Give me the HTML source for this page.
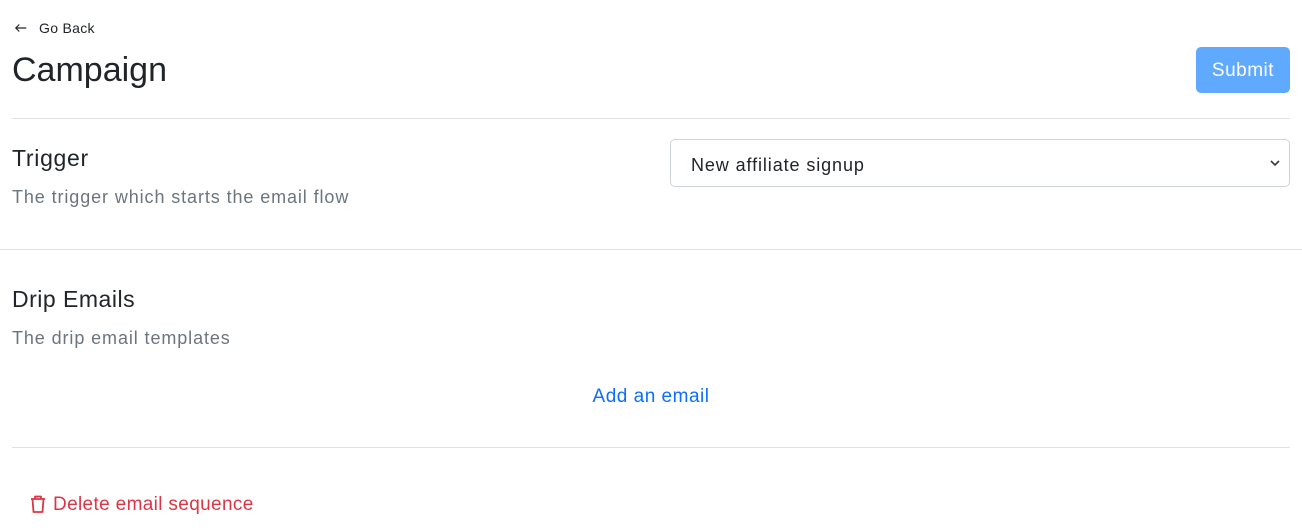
<!DOCTYPE html>
<html><head><style>
body{margin:0;width:1302px;height:532px;background:#fff;font-family:"Liberation Sans",sans-serif;color:#212529;position:relative;overflow:hidden}
.a{position:absolute;white-space:nowrap}
.hr{position:absolute;height:1px;background:#dee2e6}
.g{color:#6c757d;font-size:18px;letter-spacing:0.9px}
</style></head><body>
<div class="a" style="left:14px;top:20px;font-size:14px;color:#212529;letter-spacing:0.3px">
<svg width="14" height="14" viewBox="0 0 16 16" style="vertical-align:-2px;margin-right:11px"><path d="M14 8H2M6 4L2 8l4 4" fill="none" stroke="#212529" stroke-width="1.3"/></svg>Go Back</div>
<div class="a" style="left:12px;top:51px;font-size:34px">Campaign</div>
<div class="a" style="left:1196px;top:47px;width:94px;height:46px;background:#5fa9fe;border-radius:5px;color:#fff;font-size:19px;line-height:48px;text-align:center;letter-spacing:0.5px">Submit</div>
<div class="hr" style="left:12px;width:1278px;top:118px"></div>
<div class="a" style="left:12px;top:145px;font-size:23px;letter-spacing:0.7px">Trigger</div>
<div class="a g" style="left:12px;top:187px">The trigger which starts the email flow</div>
<div class="a" style="left:670px;top:139px;width:618px;height:46px;border:1px solid #ced4da;border-radius:5px;font-size:18px;line-height:50px">
<span style="margin-left:20px;color:#212529;letter-spacing:0.9px">New affiliate signup</span>
<svg width="12" height="10" viewBox="0 0 12 10" style="position:absolute;right:8px;top:18px"><path d="M2 3l4 4 4-4" fill="none" stroke="#343a40" stroke-width="1.6"/></svg></div>
<div class="hr" style="left:0;width:1302px;top:249px"></div>
<div class="a" style="left:12px;top:286px;font-size:23px;letter-spacing:0.5px">Drip Emails</div>
<div class="a g" style="left:12px;top:328px">The drip email templates</div>
<div class="a" style="left:0;width:1302px;text-align:center;top:386px;font-size:19px;color:#0d6efd;letter-spacing:0.5px">Add an email</div>
<div class="hr" style="left:12px;width:1278px;top:447px"></div>
<div class="a" style="left:29px;top:494px;font-size:19px;color:#dc3545;letter-spacing:0.35px">
<svg width="18" height="20" viewBox="0 0 18 20" style="vertical-align:-4px;margin-right:6px"><path d="M2 5h14M6 5V2.5h6V5M3.5 5l1 13h9l1-13" fill="none" stroke="#dc3545" stroke-width="1.8" stroke-linejoin="round"/></svg>Delete email sequence</div>
</body></html>
